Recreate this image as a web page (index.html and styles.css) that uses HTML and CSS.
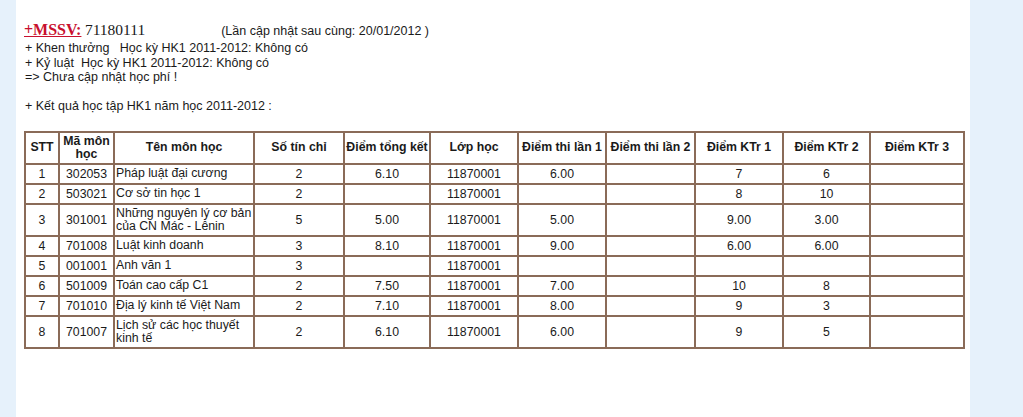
FILE: index.html
```html
<!DOCTYPE html>
<html lang="vi">
<head>
<meta charset="utf-8">
<title>Kết quả học tập</title>
<link rel="stylesheet" href="styles.css">
</head>
<body>
<div class="page">
  <main class="panel">
    <div class="info">
      <div class="id-line"><span class="mssv-label">+MSSV:</span> <span class="mssv">71180111</span><span class="updated">(Lần cập nhật sau cùng: 20/01/2012 )</span></div>
      <div class="line">+ Khen thưởng&nbsp;&nbsp; Học kỳ HK1 2011-2012: Không có</div>
      <div class="line">+ Kỷ luật&nbsp; Học kỳ HK1 2011-2012: Không có</div>
      <div class="line">=&gt; Chưa cập nhật học phí !</div>
      <div class="line blank">&nbsp;</div>
      <div class="line">+ Kết quả học tập HK1 năm học 2011-2012 :</div>
    </div>
    <table class="grades">
      <colgroup>
        <col class="c-stt"><col class="c-ma"><col class="c-ten"><col class="c-tc"><col class="c-tk"><col class="c-lop"><col class="c-t1"><col class="c-t2"><col class="c-k1"><col class="c-k2"><col class="c-k3">
      </colgroup>
      <thead>
        <tr><th>STT</th><th>Mã môn học</th><th>Tên môn học</th><th>Số tín chỉ</th><th class="nw">Điểm tổng kết</th><th>Lớp học</th><th class="nw">Điểm thi lần 1</th><th class="nw">Điểm thi lần 2</th><th>Điểm KTr 1</th><th>Điểm KTr 2</th><th>Điểm KTr 3</th></tr>
      </thead>
      <tbody>
        <tr><td>1</td><td>302053</td><td class="name">Pháp luật đại cương</td><td>2</td><td>6.10</td><td>11870001</td><td>6.00</td><td></td><td>7</td><td>6</td><td></td></tr>
        <tr><td>2</td><td>503021</td><td class="name">Cơ sở tin học 1</td><td>2</td><td></td><td>11870001</td><td></td><td></td><td>8</td><td>10</td><td></td></tr>
        <tr><td>3</td><td>301001</td><td class="name">Những nguyên lý cơ bản của CN Mác - Lênin</td><td>5</td><td>5.00</td><td>11870001</td><td>5.00</td><td></td><td>9.00</td><td>3.00</td><td></td></tr>
        <tr><td>4</td><td>701008</td><td class="name">Luật kinh doanh</td><td>3</td><td>8.10</td><td>11870001</td><td>9.00</td><td></td><td>6.00</td><td>6.00</td><td></td></tr>
        <tr><td>5</td><td>001001</td><td class="name">Anh văn 1</td><td>3</td><td></td><td>11870001</td><td></td><td></td><td></td><td></td><td></td></tr>
        <tr><td>6</td><td>501009</td><td class="name">Toán cao cấp C1</td><td>2</td><td>7.50</td><td>11870001</td><td>7.00</td><td></td><td>10</td><td>8</td><td></td></tr>
        <tr><td>7</td><td>701010</td><td class="name">Địa lý kinh tế Việt Nam</td><td>2</td><td>7.10</td><td>11870001</td><td>8.00</td><td></td><td>9</td><td>3</td><td></td></tr>
        <tr><td>8</td><td>701007</td><td class="name">Lịch sử các học thuyết kinh tế</td><td>2</td><td>6.10</td><td>11870001</td><td>6.00</td><td></td><td>9</td><td>5</td><td></td></tr>
      </tbody>
    </table>
  </main>
</div>
</body>
</html>
```

FILE: styles.css
```css
html, body {
  margin: 0;
  padding: 0;
}
body {
  background: #e6f1fb;
  font-family: "Liberation Sans", Arial, sans-serif;
  font-size: 12.5px;
  color: #1a1a1a;
}
.page {
  display: flex;
  min-height: 417px;
}
.panel {
  margin-left: 16px;
  width: 954px;
  background: #ffffff;
  padding: 20px 0 0 8px;
  box-sizing: border-box;
}
.info {
  line-height: 14.5px;
  margin-bottom: 17px;
}
.info .line {
  padding-left: 1px;
}
.id-line {
  line-height: 19px;
}
.mssv-label {
  font-family: "Liberation Serif", "Times New Roman", serif;
  font-size: 16px;
  font-weight: bold;
  color: #c8102e;
  text-decoration: underline;
}
.mssv {
  font-family: "Liberation Serif", "Times New Roman", serif;
  font-size: 15.5px;
}
.updated {
  margin-left: 76px;
}
.grades {
  border-collapse: collapse;
  table-layout: fixed;
  width: 939px;
  border: 2px solid #8a6b58;
  font-size: 12.3px;
}
.grades th, .grades td {
  border: 2px solid #8a6b58;
  padding: 2px 1px;
  text-align: center;
  vertical-align: middle;
  line-height: 14px;
}
.grades th {
  font-weight: bold;
  line-height: 13px;
  padding: 2px 0;
}
.grades th.nw {
  white-space: nowrap;
}
.grades td.name {
  text-align: left;
  padding: 2px 0 2px 1px;
  line-height: 13px;
}
.c-stt { width: 34px; }
.c-ma { width: 55px; }
.c-ten { width: 140px; }
.c-tc { width: 90px; }
.c-tk { width: 86px; }
.c-lop { width: 88px; }
.c-t1 { width: 88px; }
.c-t2 { width: 89px; }
.c-k1 { width: 88px; }
.c-k2 { width: 87px; }
.c-k3 { width: 94px; }
```
